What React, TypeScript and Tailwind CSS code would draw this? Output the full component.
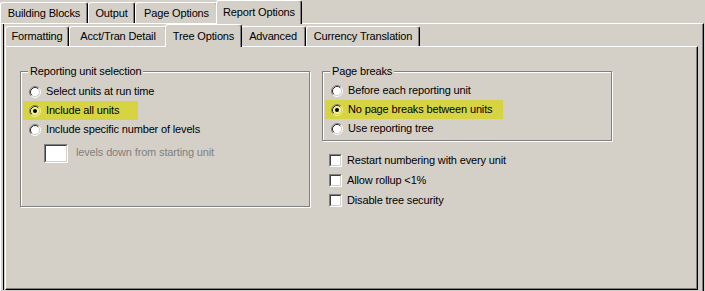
import type { ReactNode } from "react";

const BG = "bg-[#d4d0c8]";

const Tab = ({
  label,
  className,
  active,
  outer,
}: {
  label: string;
  className: string;
  active?: boolean;
  outer?: boolean;
}) => {
  const base =
    "flex items-center justify-center whitespace-nowrap border-t border-l border-r border-t-white border-l-white border-r-black rounded-t-[3px] shadow-[inset_-1px_0_0_#808080]";
  if (active) {
    return (
      <div
        className={`${base} ${BG} relative z-10 -mb-px ${
          outer ? "h-[24px] pb-[1px]" : "h-[23px]"
        } ${className}`}
      >
        {label}
      </div>
    );
  }
  return (
    <div className={`${base} ${outer ? "h-[21px]" : "h-[20px]"} ${className}`}>
      {label}
    </div>
  );
};

const Radio = ({ checked, hl }: { checked?: boolean; hl?: boolean }) => (
  <svg width="12" height="12" viewBox="0 0 12 12" className="shrink-0">
    <circle cx="6" cy="6" r="4.5" fill={hl ? "#f2f29a" : "#ffffff"} />
    <path d="M2.11 9.89 A5.5 5.5 0 0 1 9.89 2.11" fill="none" stroke="#808080" />
    <path d="M9.89 2.11 A5.5 5.5 0 0 1 2.11 9.89" fill="none" stroke={hl ? "#f2f29a" : "#ffffff"} />
    <path d="M2.82 9.18 A4.5 4.5 0 0 1 9.18 2.82" fill="none" stroke="#303030" />
    <path d="M9.18 2.82 A4.5 4.5 0 0 1 2.82 9.18" fill="none" stroke={hl ? "#d6d443" : "#d4d0c8"} />
    {checked && <circle cx="6" cy="6" r="2" fill="#000000" />}
  </svg>
);

const RadioRow = ({
  label,
  checked,
  hl,
  width,
}: {
  label: string;
  checked?: boolean;
  hl?: boolean;
  width?: string;
}) => (
  <div
    className={`flex items-center h-[19px] pl-[6px] gap-[5px] whitespace-nowrap ${
      hl ? `bg-[#d6d443] ${width}` : ""
    }`}
  >
    <Radio checked={checked} hl={hl} />
    <span>{label}</span>
  </div>
);

const Sunken = ({ className, children }: { className: string; children?: ReactNode }) => (
  <div
    className={`border border-t-[#808080] border-l-[#808080] border-r-white border-b-white ${className}`}
  >
    <div className="w-full h-full border border-t-[#404040] border-l-[#404040] border-r-[#d4d0c8] border-b-[#d4d0c8] bg-white">
      {children}
    </div>
  </div>
);

const CheckRow = ({ label }: { label: string }) => (
  <div className="flex items-center h-[20px] gap-[5px] whitespace-nowrap">
    <Sunken className="w-[13px] h-[13px] shrink-0" />
    <span>{label}</span>
  </div>
);

const GroupBox = ({
  title,
  className,
  children,
}: {
  title: string;
  className: string;
  children: ReactNode;
}) => (
  <div
    className={`relative border border-[#808080] shadow-[1px_1px_0_#ffffff,inset_1px_1px_0_#ffffff] ${className}`}
  >
    <span className={`absolute -top-[7px] left-[7px] px-[2px] leading-[13px] ${BG}`}>
      {title}
    </span>
    {children}
  </div>
);

export default function App() {
  return (
    <div
      className={`w-[705px] h-[291px] overflow-hidden ${BG} text-black text-[11px] tracking-[-0.15px] font-['Liberation_Sans',Arial,sans-serif] flex flex-col`}
    >
      {/* outer tabs */}
      <div className="flex items-end h-[23px] shrink-0">
        <Tab outer label="Building Blocks" className="w-[88px]" />
        <Tab outer label="Output" className="w-[47px]" />
        <Tab outer label="Page Options" className="w-[83px]" />
        <Tab outer active label="Report Options" className="w-[86px] -ml-[2px]" />
      </div>

      {/* outer panel */}
      <div className="flex-1 w-[704px] border-t border-l border-r border-t-white border-l-white border-r-black shadow-[inset_-1px_0_0_#808080] pl-[2px]">
        <div className="border-l border-black pl-[1px] w-[696px]">
          {/* inner tabs */}
          <div className="flex items-end h-[22px]">
            <Tab label="Formatting" className="w-[64px]" />
            <Tab label="Acct/Tran Detail" className="w-[98px]" />
            <Tab active label="Tree Options" className="w-[77px] -mx-[2px]" />
            <Tab label="Advanced" className="w-[66px]" />
            <Tab label="Currency Translation" className="w-[114px]" />
          </div>

          {/* inner panel */}
          <div className="w-[693px] h-[244px] border border-t-white border-l-white border-r-black border-b-black shadow-[inset_-1px_-1px_0_#808080] pt-[24px] pl-[14px] flex gap-[12px] items-start">
            <GroupBox title="Reporting unit selection" className="w-[290px] h-[136px] pt-[10px] pl-[2px]">
              <RadioRow label="Select units at run time" />
              <RadioRow label="Include all units" checked hl width="w-[115px]" />
              <RadioRow label="Include specific number of levels" />
              <div className="flex items-center gap-[8px] mt-[5px] pl-[21px]">
                <Sunken className="w-[24px] h-[19px]" />
                <span className="text-[#808080] -mt-[3px]">levels down from starting unit</span>
              </div>
            </GroupBox>

            <div className="flex flex-col">
              <GroupBox title="Page breaks" className="w-[290px] h-[70px] pt-[9px] pl-[2px]">
                <RadioRow label="Before each reporting unit" />
                <RadioRow label="No page breaks between units" checked hl width="w-[178px]" />
                <RadioRow label="Use reporting tree" />
              </GroupBox>
              <div className="flex flex-col mt-[9px] pl-[7px]">
                <CheckRow label="Restart numbering with every unit" />
                <CheckRow label="Allow rollup <1%" />
                <CheckRow label="Disable tree security" />
              </div>
            </div>
          </div>
        </div>
      </div>
    </div>
  );
}
